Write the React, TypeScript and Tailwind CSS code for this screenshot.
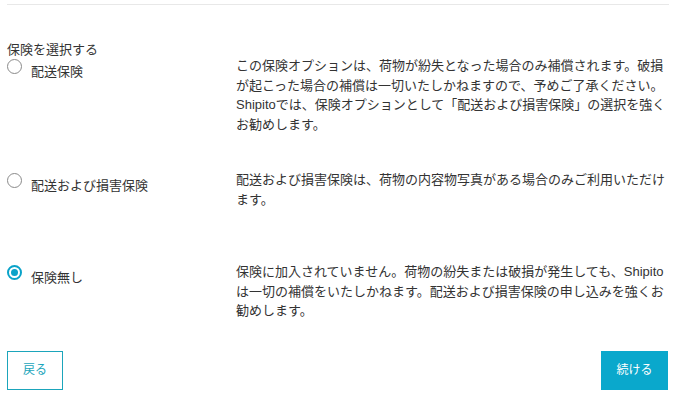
import { useState } from 'react';

const options = [
  {
    id: 'delivery',
    label: '配送保険',
    desc: 'この保険オプションは、荷物が紛失となった場合のみ補償されます。破損が起こった場合の補償は一切いたしかねますので、予めご了承ください。Shipitoでは、保険オプションとして「配送および損害保険」の選択を強くお勧めします。',
  },
  {
    id: 'damage',
    label: '配送および損害保険',
    desc: '配送および損害保険は、荷物の内容物写真がある場合のみご利用いただけます。',
  },
  {
    id: 'none',
    label: '保険無し',
    desc: '保険に加入されていません。荷物の紛失または破損が発生しても、Shipitoは一切の補償をいたしかねます。配送および損害保険の申し込みを強くお勧めします。',
  },
];

const font = { fontFamily: '"Liberation Sans", "Noto Sans CJK JP", sans-serif' };

function Radio({ checked }: { checked: boolean }) {
  return (
    <span
      className={`flex h-[15px] w-[15px] shrink-0 items-center justify-center rounded-full bg-white ${
        checked ? 'border-2 border-[#0aa3c9]' : 'border border-[#8a8a8a]'
      }`}
    >
      {checked && <span className="h-[7px] w-[7px] rounded-full bg-[#0aa3c9]" />}
    </span>
  );
}

export default function App() {
  const [selected, setSelected] = useState('none');

  return (
    <div className="h-[400px] w-[682px] bg-white px-[7px] pt-[4px] text-[#333]" style={font}>
      <div className="h-px w-[662px] bg-[#e8e8e8]" />

      <div className="mt-[35px] text-[13px] leading-[19px]">保険を選択する</div>

      <div className="flex flex-col">
        {options.map((o, i) => (
          <div
            key={o.id}
            className={`flex ${i === 1 ? 'mt-[36px]' : i === 2 ? 'mt-[53px]' : 'mt-[-3px]'}`}
          >
            <label
              className="flex w-[229px] shrink-0 cursor-pointer items-start"
              onClick={() => setSelected(o.id)}
            >
              <span className="mt-[3px]">
                <Radio checked={selected === o.id} />
              </span>
              <span className="ml-[9px] mt-[6px] text-[13px] leading-[19px]">{o.label}</span>
            </label>
            <p className="w-[432px] text-[13px] leading-[19.5px]">{o.desc}</p>
          </div>
        ))}
      </div>

      <div className="mt-[30px] flex w-[661px] items-center justify-between">
        <button className="h-[39px] w-[56px] border border-[#1ba5bb] text-[12px] text-[#1ba5bb]">
          戻る
        </button>
        <button className="h-[39px] w-[67px] bg-[#0aa8cc] text-[12px] text-white">続ける</button>
      </div>
    </div>
  );
}
